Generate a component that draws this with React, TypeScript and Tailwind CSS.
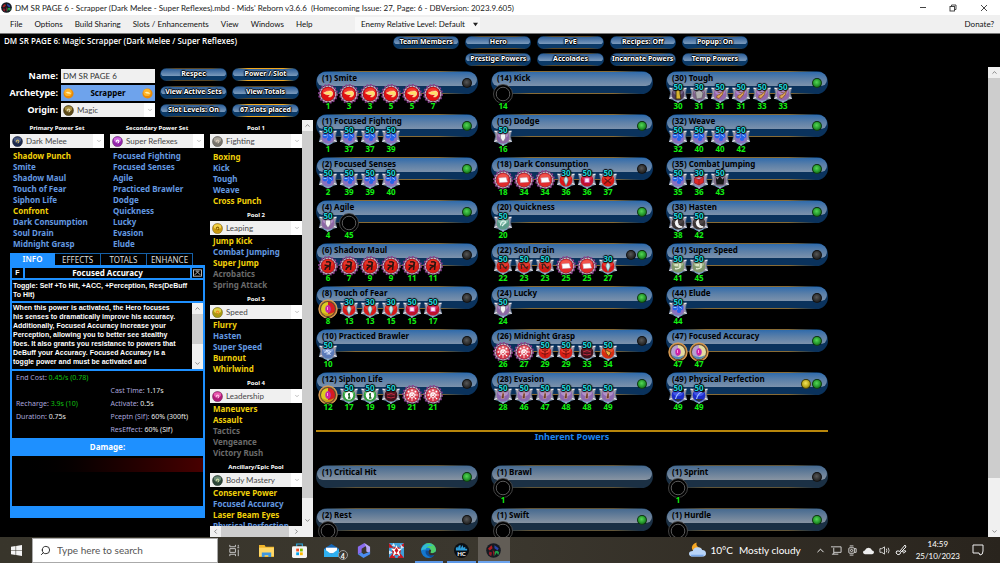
import type { ReactNode } from 'react'
import { ChevronDown, ChevronLeft, ChevronRight, ChevronUp, Search } from 'lucide-react'

type Slot = [icon: string, level: number, boost?: number]
type Power = { level: number; name: string; slots?: Slot[]; leds?: string[] }

const repeat = (icon: string, levels: number[], boost?: number): Slot[] => levels.map((l) => [icon, l, boost])

const POWERS: Power[] = [
    { level: 1, name: 'Smite', leds: ['off'], slots: repeat('fist', [1, 3, 3, 5, 5, 7]) },
    { level: 1, name: 'Focused Fighting', leds: ['on'], slots: repeat('dodge', [1, 37, 37, 39], 50) },
    { level: 2, name: 'Focused Senses', leds: ['on'], slots: repeat('dodge', [2, 39, 39, 40], 50) },
    { level: 4, name: 'Agile', leds: ['on'], slots: [['shield', 4, 50], ['empty', 45]] },
    { level: 6, name: 'Shadow Maul', leds: ['off'], slots: repeat('claw', [6, 7, 9, 9, 11, 11]) },
    {
        level: 8,
        name: 'Touch of Fear',
        leds: ['off'],
        slots: [['hero', 8], ...repeat('drop', [13, 13, 15], 30), ...repeat('gem', [15, 17], 50)],
    },
    { level: 10, name: 'Practiced Brawler', leds: ['off'], slots: [['swirl', 10, 50]] },
    {
        level: 12,
        name: 'Siphon Life',
        leds: ['off'],
        slots: [['hero', 12], ...repeat('heal', [17, 19], 50), ['dark', 19, 50], ...repeat('flake', [21, 21])],
    },
    { level: 14, name: 'Kick', slots: [['empty', 14]] },
    { level: 16, name: 'Dodge', leds: ['on'], slots: [['shield', 16, 50]] },
    {
        level: 18,
        name: 'Dark Consumption',
        leds: ['off'],
        slots: [...repeat('card', [18, 34, 34]), ['drop', 36, 30], ['gem', 36, 50], ['cross', 37, 50]],
    },
    { level: 20, name: 'Quickness', leds: ['on'], slots: [['teal', 20, 50]] },
    {
        level: 22,
        name: 'Soul Drain',
        leds: ['off', 'on'],
        slots: [...repeat('maul', [22, 23, 23], 50), ...repeat('card', [25, 25]), ['drop', 27, 30]],
    },
    { level: 24, name: 'Lucky', leds: ['on'], slots: [['shield', 24, 50]] },
    {
        level: 26,
        name: 'Midnight Grasp',
        leds: ['off'],
        slots: [...repeat('flake', [26, 27]), ...repeat('web', [29, 29], 50), ['dark', 33, 50], ['blade', 34, 50]],
    },
    { level: 28, name: 'Evasion', leds: ['on'], slots: repeat('boot', [28, 46, 47, 48, 48, 49], 50) },
    {
        level: 30,
        name: 'Tough',
        leds: ['on'],
        slots: [['idol', 30, 50], ['cube', 31, 30], ...repeat('bolt', [31, 31, 33, 33], 50)],
    },
    { level: 32, name: 'Weave', leds: ['on'], slots: repeat('dodge', [32, 40, 40, 42], 50) },
    {
        level: 35,
        name: 'Combat Jumping',
        leds: ['on'],
        slots: [['dodge', 35, 50], ['dice', 36, 30], ['crown', 43, 50]],
    },
    { level: 38, name: 'Hasten', leds: ['on'], slots: repeat('moon', [38, 42], 50) },
    { level: 41, name: 'Super Speed', leds: ['off'], slots: repeat('run', [41, 45], 50) },
    { level: 44, name: 'Elude', leds: ['off'], slots: [['dodge', 44, 50]] },
    { level: 47, name: 'Focused Accuracy', leds: ['on'], slots: repeat('focus', [47, 47]) },
    { level: 49, name: 'Physical Perfection', leds: ['mid', 'on'], slots: repeat('orbit', [49, 49], 50) },
]

// slot level 0 = inherent slot without a label
const INHERENT: Power[] = [
    { level: 1, name: 'Critical Hit', leds: ['on'] },
    { level: 1, name: 'Brawl', slots: [['empty', 1]] },
    { level: 1, name: 'Sprint', leds: ['off'], slots: [['empty', 1]] },
    { level: 2, name: 'Rest', leds: ['off'], slots: [['empty', 0]] },
    { level: 1, name: 'Swift', leds: ['on'], slots: [['empty', 0]] },
    { level: 1, name: 'Hurdle', leds: ['on'], slots: [['empty', 0]] },
]

// y = available, b = taken, g = locked
const COLORS: Record<string, string> = { y: 'text-[#f0d00a]', b: 'text-[#6399e0]', g: 'text-[#6b6b6b]' }

type SetData = { label: string; value: string; orb: [string, string, string]; powers: [string, string][] }

const PRIMARY: SetData = {
    label: 'Primary Power Set',
    value: 'Dark Melee',
    orb: ['#1d2a4e', '#4a5c86', '#c9b46a'],
    powers: [
        ['y', 'Shadow Punch'],
        ['b', 'Smite'],
        ['b', 'Shadow Maul'],
        ['b', 'Touch of Fear'],
        ['b', 'Siphon Life'],
        ['y', 'Confront'],
        ['b', 'Dark Consumption'],
        ['b', 'Soul Drain'],
        ['b', 'Midnight Grasp'],
    ],
}
const SECONDARY: SetData = {
    label: 'Secondary Power Set',
    value: 'Super Reflexes',
    orb: ['#9526ad', '#cf6be0', '#ffffff'],
    powers: [
        ['b', 'Focused Fighting'],
        ['b', 'Focused Senses'],
        ['b', 'Agile'],
        ['b', 'Practiced Brawler'],
        ['b', 'Dodge'],
        ['b', 'Quickness'],
        ['b', 'Lucky'],
        ['b', 'Evasion'],
        ['b', 'Elude'],
    ],
}
const POOLS: SetData[] = [
    {
        label: 'Pool 1',
        value: 'Fighting',
        orb: ['#77736c', '#aaa69c', '#d8c9b8'],
        powers: [['y', 'Boxing'], ['b', 'Kick'], ['b', 'Tough'], ['b', 'Weave'], ['y', 'Cross Punch']],
    },
    {
        label: 'Pool 2',
        value: 'Leaping',
        orb: ['#c99a10', '#f2d24a', '#8c6200'],
        powers: [['y', 'Jump Kick'], ['b', 'Combat Jumping'], ['y', 'Super Jump'], ['g', 'Acrobatics'], ['g', 'Spring Attack']],
    },
    {
        label: 'Pool 3',
        value: 'Speed',
        orb: ['#a89a10', '#e0d24a', '#f08c20'],
        powers: [['y', 'Flurry'], ['b', 'Hasten'], ['b', 'Super Speed'], ['y', 'Burnout'], ['y', 'Whirlwind']],
    },
    {
        label: 'Pool 4',
        value: 'Leadership',
        orb: ['#b01a78', '#e85ab0', '#ffc0e4'],
        powers: [['y', 'Maneuvers'], ['y', 'Assault'], ['g', 'Tactics'], ['g', 'Vengeance'], ['g', 'Victory Rush']],
    },
    {
        label: 'Ancillary/Epic Pool',
        value: 'Body Mastery',
        orb: ['#2c4638', '#6c8c78', '#c8d8a0'],
        powers: [['y', 'Conserve Power'], ['b', 'Focused Accuracy'], ['y', 'Laser Beam Eyes'], ['b', 'Physical Perfection']],
    },
]

const OUTLINE = '[text-shadow:1px_0_1px_#000,-1px_0_1px_#000,0_1px_1px_#000,0_-1px_1px_#000]'

/* frame kind, core colour, highlight colour, glyph */
const GLYPHS: Record<string, [string, string, string, ReactNode]> = {
    fist: ['spike', '#e01010', '#ff5a48', <path d="M5.500 9q4-2.500 7.500-2 2.500 1 1.500 4-1 2.500-4 2 2-2 1-2.500-3 1-6-1.500z" fill="#ffdf6a" stroke="#fff4d0" strokeWidth=".5" />],
    dodge: ['hex', '#8a70c0', '#c4b0f0', <g fill="#2463e8"><circle cx="7" cy="9" r="2.400" /><circle cx="12.300" cy="8.500" r="2.900" /><circle cx="11" cy="12" r="2.100" /><path d="M5.500 8.500h3M11 7.500l3 2" stroke="#9fd0ff" strokeWidth=".9" /></g>],
    shield: ['hex', '#8d68a6', '#c9a8dc', <path d="M7.500 7h5v4q-1 2.500-2.500 3.500-1.500-1-2.500-3.500z" fill="#f4f4f4" stroke="#7a6a84" strokeWidth=".6" />],
    claw: ['spike', '#d81c14', '#f05040', <path d="M8 6q5-1 4 2 0 2-3 3-2 1-2 3M6.500 9l4 1M12.500 6l-1 8" fill="none" stroke="#2c1410" strokeWidth="1.500" />],
    drop: ['hex', '#d81818', '#ff5040', <path d="M10 6q-2.500 2.500-2 5l2 4.500 2-4.500q.5-2.500-2-5z" fill="#c4ecf0" stroke="#47808a" strokeWidth=".6" />],
    gem: ['hex', '#c0102c', '#f04058', <rect x="7.800" y="8" width="4.400" height="4.400" fill="#ffe4f8" stroke="#d050b0" strokeWidth=".8" />],
    cross: ['hex', '#d81814', '#ff4a38', <path d="M6 14l8-6.500M6.500 8.500l6.500 5" stroke="#6c1410" strokeWidth="1.100" />],
    swirl: ['hex', '#5a7ab8', '#a8c0ec', <path d="M6.500 11q2.500-4 6-1.500-1 3.500-4 2.500M8 8l4.500 5" fill="none" stroke="#dce8ff" strokeWidth="1" />],
    heal: ['hex', '#2ea03c', '#8ce08c', <g><circle cx="10" cy="10.500" r="4.200" fill="#fff" /><path d="M10.200 8v5M9 9.500h1M9 13h2.500" stroke="#1c6a24" strokeWidth="1.400" /></g>],
    dark: ['hex', '#401018', '#70242e', <path d="M6 10q4-3 8 0M6 12q4 2 8 0" fill="none" stroke="#c02840" strokeWidth="1" />],
    flake: ['spike', '#d83848', '#f08890', <path d="M10 4.500v11M4.500 10h11M6 6l8 8M14 6l-8 8" stroke="#fff" strokeWidth="1.500" strokeDasharray="1.800 .7" />],
    card: ['spike', '#e02c2c', '#ff7a6a', <path d="M6 8l7-.5 1.500 4.500-8 .5z" fill="#fff" stroke="#c8c0d8" strokeWidth=".5" />],
    teal: ['hex', '#5a9c8a', '#a8dccc', <path d="M7.500 12.500q0-4.500 3.500-4.500 2 0 1.500 2M9 13l3.500-3.500" fill="none" stroke="#e0f4ec" strokeWidth="1.200" />],
    maul: ['hex', '#d01c14', '#f05040', <path d="M6.500 9q3-2 4 1t3.500.5M7.500 9v4M11 11l2.500 2" fill="none" stroke="#40201c" strokeWidth="1.300" />],
    web: ['hex', '#d81c14', '#ff5844', <path d="M10 6v9M7 8q3 3 6 0M6.500 11q3.500 3 7 0" fill="none" stroke="#7c1410" strokeWidth="1" />],
    blade: ['hex', '#d82c10', '#ff6a3c', <path d="M7 7.500l6 3-2 4-2.500-3z" fill="#f0b040" stroke="#4a2410" strokeWidth=".7" />],
    boot: ['hex', '#8c68b0', '#c8acd8', <path d="M10 6q1.800 3 1 7.500H8.300Q9 9 10 6z" fill="#6c3824" stroke="#e0b0a0" strokeWidth=".5" />],
    idol: ['hex', '#4c3a5c', '#8c78a0', <path d="M8 6h4v3.500l1 5.500H8z" fill="#d8b430" stroke="#342808" strokeWidth=".9" />],
    cube: ['hex', '#7c6088', '#a890b4', <path d="M6.500 8l4.500-2 3 3-1 5-5.500 1z" fill="#b0b0b0" stroke="#606060" strokeWidth=".7" />],
    bolt: ['hex', '#9064ac', '#c49cd8', <path d="M6.500 13.500q0-3 3.500-3l3.500-4-1 4-3.500 4zM7.500 8l3.500 1" fill="#e0a858" stroke="#7c4c18" strokeWidth=".7" />],
    dice: ['hex', '#9c80b0', '#c8b8d8', <path d="M5.500 8l4.500-3 4.500 2v5.500L10 15l-4.500-2zM10 9.500V15M5.500 8l4.500 1.700L14.500 7" fill="#e02828" stroke="#8c1010" strokeWidth=".6" />],
    crown: ['hex', '#7c6c88', '#a89cb0', <path d="M5.500 7l2 2.500L10 6l2.500 3.500 2-2.500-1 7.500h-7z" fill="#161616" />],
    moon: ['hex', '#3a3434', '#5c5454', <path d="M9.300 6q-3.500 3.500-1 7 2.500 2.500 6 1-5.500-1-5-8z" fill="#f4f4f4" stroke="#fff" strokeWidth=".9" />],
    run: ['hex', '#80986c', '#c4d4a8', <path d="M12 7v4.500q-2.500 2-5 1M6.500 9H10" fill="none" stroke="#e8f0d8" strokeWidth="1.400" />],
    orbit: ['hex', '#1c2cc8', '#5c70ff', <g><path d="M7.500 14q1-5 5.500-7" stroke="#a0c0ff" strokeWidth="1.200" fill="none" /><circle cx="14" cy="5.500" r="2" fill="#101014" /><path d="M6 14h8l-4 3z" fill="#303440" /></g>],
}

function SlotIcon({ icon }: { icon: string }) {
    if (icon === 'empty') {
        return (
            <svg viewBox="0 0 20 20" className="size-5 overflow-visible" aria-hidden="true">
                <circle cx="10" cy="10" r="9.500" fill="#000" stroke="#4c4c4c" strokeWidth=".9" />
                <circle cx="10" cy="10" r="6.800" fill="#000" stroke="#5c5c5c" strokeWidth="1" />
            </svg>
        )
    }
    if (icon === 'hero' || icon === 'focus') {
        const hero = icon === 'hero'
        return (
            <svg viewBox="0 0 20 20" className="size-5 overflow-visible" aria-hidden="true">
                <circle cx="10" cy="10" r="8.800" fill="#5a4a30" stroke="#c88438" strokeWidth="1.600" />
                <circle cx="10" cy="10" r="9.200" fill="none" stroke="#f4cc90" strokeWidth=".4" />
                <path d="M10 3a7 7 0 0 0 0 14z" fill={hero ? '#dccc20' : '#b8a0d0'} />
                <path d="M10 3a7 7 0 0 1 0 14z" fill={hero ? '#d81c20' : '#e4dca0'} />
                <path d="M4 13q6 4 12 0-2 4-6 4t-6-4z" fill={hero ? '#c89c18' : '#4c88b8'} />
                <ellipse cx="10" cy="10" rx="2.400" ry="3.600" fill="#d81ca0" stroke="#a83cc0" strokeWidth=".7" />
                <path d="M9.500 8v3" stroke="#ff9ce0" />
            </svg>
        )
    }
    const [frame, core, light, glyph] = GLYPHS[icon]
    return (
        <svg viewBox="0 0 20 20" className="size-5 overflow-visible" aria-hidden="true">
            {frame === 'hex' ? (
                <>
                    <path
                        d="M10 2l2.500 1.500L18.500 4 17.500 9.500l1.200 5-4.500 1.500L10 19l-4.200-3-4.500-1.500 1.200-5L1.500 4l6-.5z"
                        fill="#9a96a4"
                        stroke="#4c6a90"
                        strokeWidth=".6"
                    />
                    <path d="M1.500 4l2.500 1M18.500 4L16 5M1.300 14.500l2.500-1M18.700 14.500l-2.500-1M10 19v-2" stroke="#f0f0f2" strokeWidth="1.300" />
                    <path d="M5.500 16q4.500 3 9 0" stroke="#6fb4dc" strokeWidth=".8" fill="none" />
                    <circle cx="10" cy="10.300" r="6.300" fill={core} />
                    <ellipse cx="10" cy="8" rx="5" ry="3.300" fill={light} opacity=".6" />
                </>
            ) : (
                <>
                    <circle cx="10" cy="10" r="9.200" fill="#4c2450" stroke="#8c3c94" strokeWidth="1.400" strokeDasharray="1.800 1.800" />
                    <circle cx="10" cy="10" r="7.800" fill="none" stroke="#c4b0bc" strokeWidth="1.300" strokeDasharray="2.600 .5" />
                    <circle cx="10" cy="10" r="6.900" fill={core} />
                    <ellipse cx="10" cy="7.500" rx="5.300" ry="3.600" fill={light} opacity=".5" />
                </>
            )}
            {glyph}
        </svg>
    )
}

const LEDS: Record<string, string> = {
    on: 'bg-[radial-gradient(circle_at_45%_40%,#55d855,#23962a_55%,#0a3a10)]',
    off: 'bg-[radial-gradient(circle_at_45%_40%,#585858,#2e2e2e_55%,#101010)]',
    mid: 'bg-[radial-gradient(circle_at_45%_40%,#f4e45c,#b8a818_55%,#4a4208)]',
}

function PowerBar({ power, dim }: { power: Power; dim?: boolean }) {
    const { level, name, slots = [], leds = [] } = power
    return (
        <div className="h-[43px]">
            <button
                type="button"
                className={`relative flex h-[23px] w-full items-center justify-end overflow-hidden rounded-full pr-[6px] ${dim ? 'bg-[#1b3044]' : 'bg-[#0a325c]'}`}
            >
                <span
                    className={`absolute inset-x-px top-px h-[14px] rounded-t-[10px] rounded-b-[8px] ${dim ? 'bg-linear-to-b from-[#466a90] to-[#8894a2]' : 'bg-linear-to-b from-[#2f6bab] via-[#5c80a8] to-[#7c92ac]'}`}
                />
                <span
                    className={`absolute inset-x-3 inset-y-0 border-y border-[#a87a2c] mask-x-from-80% ${dim ? 'opacity-50' : 'opacity-80'}`}
                />
                <span className="absolute top-px left-[6px] text-[8px] leading-[11px] font-bold whitespace-nowrap text-black">
                    ({level}) {name}
                </span>
                <span className="relative flex gap-px">
                    {leds.map((led) => (
                        <span key={led} className={`size-[10px] rounded-full border border-black/60 ${LEDS[led]}`} />
                    ))}
                </span>
            </button>
            <div className="relative -mt-[10px] flex gap-px pl-[2px]">
                {slots.map(([icon, slotLevel, boost], i) => (
                    <div key={i} className="relative w-5 text-center text-[8px] leading-[8px] font-bold">
                        <SlotIcon icon={icon} />
                        {boost && (
                            <span className={`absolute inset-x-0 -top-px text-[#1fd0d8] ${OUTLINE}`}>{boost}</span>
                        )}
                        {slotLevel > 0 && (
                            <span className={`relative -mt-[2px] block text-[#12f012] ${OUTLINE}`}>{slotLevel}</span>
                        )}
                    </div>
                ))}
            </div>
        </div>
    )
}

function Pill({ children, gold }: { children: ReactNode; gold?: boolean }) {
    return (
        <button
            type="button"
            className={`relative flex h-[13px] items-center justify-center overflow-hidden rounded-full bg-[#0b3a68]`}
        >
            <span className="absolute inset-x-px top-px h-[7px] rounded-t-[6px] rounded-b-[4px] bg-linear-to-b from-[#2f6099] to-[#7c9bbc]" />
            <span
                className={`absolute inset-x-1 inset-y-0 border-y mask-x-from-80% ${gold ? 'border-[#f0a820]' : 'border-[#5c4824]'}`}
            />
            <span className={`relative text-[7px] font-bold whitespace-nowrap text-white ${OUTLINE}`}>{children}</span>
        </button>
    )
}

function Orb({ orb }: { orb: [string, string, string] }) {
    return (
        <svg viewBox="0 0 12 12" className="ml-[2px] size-[11px] shrink-0" aria-hidden="true">
            <circle cx="6" cy="6" r="5.600" fill={orb[0]} stroke="#3338" strokeWidth=".6" />
            <ellipse cx="6" cy="4" rx="4" ry="2.600" fill={orb[1]} />
            <path d="M4.500 7q0-2.500 1.500-2.500T7.500 6 6 7.500" fill="none" stroke={orb[2]} strokeWidth="1.100" />
        </svg>
    )
}

function PowerSet({ set, listGap }: { set: SetData; listGap?: string }) {
    const id = set.label.toLowerCase().replace(/\W+/g, '-')
    return (
        <div className="flex flex-col">
            <label htmlFor={id} className="block text-center text-[6px] leading-[11px] font-bold text-white">
                {set.label}
            </label>
            <SelectBox id={id} value={set.value} orb={set.orb} />
            <ul className={`pl-[3px] ${listGap ?? ''}`}>
                {set.powers.map(([state, name]) => (
                    <li key={name} className="h-[11px]">
                        <button
                            type="button"
                            className={`block text-[8px] leading-[11px] font-bold whitespace-nowrap ${COLORS[state]}`}
                        >
                            {name}
                        </button>
                    </li>
                ))}
            </ul>
        </div>
    )
}

function SelectBox({ id, value, orb }: { id: string; value: string; orb: [string, string, string] }) {
    return (
        <div className="flex h-[14px] items-center bg-[#f0f0f0]">
            <Orb orb={orb} />
            <select
                id={id}
                className="h-full min-w-0 flex-1 appearance-none pl-[3px] font-['Lato'] text-[8px] text-[#484848]"
            >
                <option>{value}</option>
            </select>
            <span className="flex h-full w-[11px] items-center justify-center bg-white">
                <ChevronDown className="size-[6px] text-[#808080]" />
            </span>
        </div>
    )
}

function TitleBar() {
    return (
        <header className="flex h-[15px] shrink-0 items-center bg-white font-['Lato'] text-[8px] text-[#222]">
            <MidsLogo className="mr-[3px] ml-px size-[11px]" />
            <h1 className="flex-1 whitespace-pre">
                {"DM SR PAGE 6 - Scrapper (Dark Melee - Super Reflexes).mbd - Mids' Reborn v3.6.6  (Homecoming Issue: 27, Page: 6 - DBVersion: 2023.9.605)"}
            </h1>
            <button type="button" aria-label="Minimise" className="grid h-full w-[30px] place-items-center">
                <span className="h-px w-[6px] bg-[#444]" />
            </button>
            <button type="button" aria-label="Restore" className="grid h-full w-[30px] place-items-center">
                <svg viewBox="0 0 8 8" className="size-2" fill="none" stroke="#333" strokeWidth=".9">
                    <rect x="1" y="2.500" width="4.500" height="4.500" />
                    <path d="M2.500 2.500V1H7v4.500H5.500" />
                </svg>
            </button>
            <button type="button" aria-label="Close" className="grid h-full w-[32px] place-items-center">
                <svg viewBox="0 0 8 8" className="size-2" stroke="#333" strokeWidth=".9">
                    <path d="M1 1l6 6M7 1L1 7" />
                </svg>
            </button>
        </header>
    )
}

function MenuBar() {
    return (
        <nav className="flex h-[18px] shrink-0 items-center bg-[#f0f0f0] font-['Lato'] text-[8px] text-[#111]">
            <div className="flex w-[355px] gap-[12px] pl-[10px] whitespace-nowrap">
                {['File', 'Options', 'Build Sharing', 'Slots / Enhancements', 'View', 'Windows', 'Help'].map((item) => (
                    <button key={item} type="button">
                        {item}
                    </button>
                ))}
            </div>
            <div className="flex h-[15px] items-center bg-[#f8f8f8] pl-[6px]">
                <select aria-label="Enemy Relative Level" className="w-[110px] appearance-none text-[8px]">
                    <option>Enemy Relative Level: Default</option>
                </select>
                <svg viewBox="0 0 6 6" className="mx-[2px] size-[5px]">
                    <path d="M0 1h6L3 5z" fill="#222" />
                </svg>
            </div>
            <a href="#donate" className="mr-[6px] ml-auto">
                Donate?
            </a>
        </nav>
    )
}

function MidsLogo({ className }: { className: string }) {
    return (
        <svg viewBox="0 0 16 16" className={className} aria-hidden="true">
            <circle cx="8" cy="8" r="7.800" fill="#161a22" />
            <path d="M2 6l4-3.500 1 3L4 8z" fill="#b01c20" />
            <path d="M9 2.500l4.500 3L12.500 8 9 5.500z" fill="#2846a8" />
            <path d="M3.500 9l3 1-1 4-2.500-2zM7 7l2.500 3L8 14z" fill="#901828" />
            <path d="M9.500 9q3-2 4.500 1l-1 3-1.500-2.500L9 14z" fill="#20a048" />
        </svg>
    )
}

function Coin() {
    return (
        <svg viewBox="0 0 12 12" className="size-[11px]" aria-hidden="true">
            <circle cx="6" cy="6" r="5.500" fill="#e88a08" />
            <circle cx="5.500" cy="4.800" r="4" fill="#ffb428" />
            <path d="M3 5q3-2 6 1-3 1-6-1z" fill="#fff0b0" />
        </svg>
    )
}

function BuildForm() {
    return (
        <div className="flex gap-[5px] pt-[2px] pr-[14px]">
            <div className="grid w-[155px] grid-cols-[58px_1fr] items-center gap-x-[3px] gap-y-[2px] text-[9px] leading-[14px] font-bold text-white">
                <label htmlFor="name" className="text-right">
                    Name:
                </label>
                <input
                    id="name"
                    defaultValue="DM SR PAGE 6"
                    className="h-[14px] min-w-0 bg-[#f0f0f0] pl-[2px] font-['Lato'] text-[8px] font-normal text-[#333]"
                />
                <label htmlFor="archetype" className="text-right">
                    Archetype:
                </label>
                <div className="flex h-[16px] items-center justify-between bg-[#6ea3ec] px-[2px]">
                    <Coin />
                    <select
                        id="archetype"
                        className="h-full min-w-0 flex-1 appearance-none text-center text-[8px] font-bold text-black [text-align-last:center]"
                    >
                        <option>Scrapper</option>
                    </select>
                    <Coin />
                </div>
                <label htmlFor="origin" className="text-right">
                    Origin:
                </label>
                <div className="font-normal">
                    <SelectBox id="origin" value="Magic" orb={['#5c4a18', '#a89040', '#e8dcb0']} />
                </div>
            </div>
            <div className="-mt-px grid flex-1 grid-cols-2 content-between gap-x-[5px]">
                <Pill>Respec</Pill>
                <Pill gold>Power / Slot</Pill>
                <Pill>View Active Sets</Pill>
                <Pill>View Totals</Pill>
                <Pill>Slot Levels: On</Pill>
                <Pill gold>67 slots placed</Pill>
            </div>
        </div>
    )
}

function Stat({ label, value, green }: { label: string; value: string; green?: boolean }) {
    return (
        <p className="h-[13px] leading-[13px] whitespace-nowrap text-[#a9a6dc]">
            {label && `${label}: `}
            <span className={green ? 'text-[#10c010]' : 'text-[#e8e8e8]'}>{value}</span>
        </p>
    )
}

function InfoPanel() {
    return (
        <section className="mt-[4px] w-[195px]">
            <div role="tablist" className="flex h-[12px] pr-[12px] text-[8px] text-[#ddd]">
                {['INFO', 'EFFECTS', 'TOTALS', 'ENHANCE'].map((tab, i) => (
                    <button
                        key={tab}
                        type="button"
                        role="tab"
                        aria-selected={i === 0}
                        className={`flex-1 leading-[12px] ${i === 0 ? 'bg-[#1e90ff] font-semibold text-white' : 'border-t border-r border-[#1560a8]'}`}
                    >
                        {tab}
                    </button>
                ))}
            </div>
            <div className="flex flex-col gap-[2px] bg-[#1e90ff] px-[2px] pt-[3px] pb-[12px] font-['Liberation_Sans'] text-[8px] text-white">
                <div className="flex h-[10px] gap-[2px] text-[8px] leading-[10px] font-bold">
                    <button type="button" className="w-[11px] bg-black text-[7px]">
                        F
                    </button>
                    <h2 className="flex-1 bg-black text-center font-['Noto_Sans']">Focused Accuracy</h2>
                    <button type="button" aria-label="Dock" className="grid w-[11px] place-items-center bg-black">
                        <svg viewBox="0 0 10 8" className="h-[8px] w-[9px]" fill="none" stroke="#ddd" strokeWidth=".9">
                            <rect x=".5" y=".5" width="9" height="7" />
                            <path d="M2 6l3-3 3 3M3 2h4" />
                        </svg>
                    </button>
                </div>
                <p className="h-[21px] bg-black pt-px pl-px text-[7px] leading-[9px] font-bold">
                    Toggle: Self +To Hit, +ACC, +Perception, Res(DeBuff
                    <br />
                    To Hit)
                </p>
                <div className="flex h-[66px] overflow-hidden bg-black">
                    <p className="flex-1 pl-px text-[7px] leading-[9px] font-bold whitespace-pre">
                        {`When this power is activated, the Hero focuses
his senses to dramatically improve his accuracy.
Additionally, Focused Accuracy increase your
Perception, allowing you to better see stealthy
foes. It also grants you resistance to powers that
DeBuff your Accuracy. Focused Accuracy is a
toggle power and must be activated and`}
                    </p>
                    <div className="flex w-[11px] flex-col items-center bg-[#f0f0f0] text-[#444]">
                        <ChevronUp className="m-[2px] size-[7px]" />
                        <span className="h-[30px] w-full bg-[#cdcdcd]" />
                        <ChevronDown className="m-[2px] mt-auto size-[7px]" />
                    </div>
                </div>
                <div className="grid h-[67px] grid-cols-2 bg-black px-[4px] font-['Noto_Sans'] text-[7px]">
                    <div>
                        <Stat label="End Cost" value="0.45/s (0.78)" green />
                        <Stat label="" value="" />
                        <Stat label="Recharge" value="3.9s (10)" green />
                        <Stat label="Duration" value="0.75s" />
                    </div>
                    <div className="pt-[13px] pl-[3px]">
                        <Stat label="Cast Time" value="1.17s" />
                        <Stat label="Activate" value="0.5s" />
                        <Stat label="Pceptn (Slf)" value="60% (300ft)" />
                        <Stat label="ResEffect" value="60% (Slf)" />
                    </div>
                </div>
                <h3 className="h-[14px] text-center font-['Noto_Sans'] text-[8px] leading-[14px] font-bold">Damage:</h3>
                <div className="h-[50px] bg-black pt-[2px]">
                    <div className="h-[14px] bg-linear-to-r from-black to-[#480000]" />
                </div>
            </div>
        </section>
    )
}

function PoolColumn() {
    return (
        <div className="flex min-w-0 flex-1 bg-black">
            <div className="flex min-w-0 flex-1 flex-col">
                <div className="min-h-0 flex-1 space-y-[4px] overflow-hidden pt-[3px]">
                    {POOLS.map((pool, i) => (
                        <PowerSet key={pool.label} set={pool} listGap={i === 0 ? 'pt-[3px]' : ''} />
                    ))}
                </div>
                <div className="flex h-[11px] shrink-0 items-center bg-[#f0f0f0] text-[#444]">
                    <ChevronLeft className="mx-[2px] size-[7px]" />
                    <span className="mr-auto h-full w-[68px] bg-[#cdcdcd]" />
                    <ChevronRight className="mx-[2px] size-[7px]" />
                </div>
            </div>
            <div className="flex w-[11px] flex-col items-center bg-[#f0f0f0] text-[#444]">
                <ChevronUp className="my-[2px] size-[7px]" />
                <span className="h-[367px] w-full bg-[#cdcdcd]" />
                <ChevronDown className="mt-auto mb-[13px] size-[7px]" />
            </div>
        </div>
    )
}

function BuildView() {
    return (
        <main className="min-w-0 flex-1 overflow-hidden pt-[4px] pl-[3px]">
            <div className="max-w-[512px]">
                <div className="grid grid-flow-col grid-cols-3 grid-rows-8 gap-x-[13px]">
                    {POWERS.map((power) => (
                        <PowerBar key={power.name} power={power} />
                    ))}
                </div>
                <h2 className="mt-[15px] border-t-2 border-[#b8860b] text-center text-[9px] leading-[10px] font-bold text-[#1e86f0]">
                    Inherent Powers
                </h2>
                <div className="mt-[23px] grid grid-cols-3 gap-x-[13px]">
                    {INHERENT.map((power) => (
                        <PowerBar key={power.name} power={power} dim />
                    ))}
                </div>
            </div>
        </main>
    )
}

const APPS: { name: string; running?: boolean; icon: ReactNode }[] = [
    {
        name: 'Task View',
        icon: <path d="M3 2v2h6V2M3 14v-2h6v2M3 6h6v4H3zM12 2v2M12 7v7M11 5h2" fill="none" stroke="#ccc" strokeWidth="1" />,
    },
    {
        name: 'File Explorer',
        icon: (
            <g>
                <path d="M0 2h6l1 2h9v11H0z" fill="#f0b429" />
                <path d="M0 5h16v9H0z" fill="#ffd766" />
                <path d="M3 15v-5h10v5h-3v-2H6v2z" fill="#3f97e0" />
            </g>
        ),
    },
    {
        name: 'Store',
        icon: (
            <g>
                <path d="M5 4V1h6v3" fill="none" stroke="#2aa8e0" strokeWidth="1.200" />
                <rect y="3.500" width="16" height="12.500" rx="1.500" fill="#f4f4f4" />
                <path d="M4.500 6h3v3h-3z" fill="#f04e23" />
                <path d="M8.500 6h3v3h-3z" fill="#7fba00" />
                <path d="M4.500 10h3v3h-3z" fill="#00a4ef" />
                <path d="M8.500 10h3v3h-3z" fill="#ffb900" />
            </g>
        ),
    },
    {
        name: 'Mail',
        icon: (
            <g>
                <path d="M0 6l8-5 8 5v9H0z" fill="#1466b8" />
                <path d="M2 5h12v6H2z" fill="#fff" />
                <path d="M0 6l8 6 8-6v9H0z" fill="#2fb0f0" />
            </g>
        ),
    },
    {
        name: 'Microsoft 365',
        icon: (
            <g>
                <path d="M9 0L2 4v8l4-2V6l5-3z" fill="#8a6cf0" />
                <path d="M9 0l6 4v7l-4-2V5z" fill="#b8a8f8" />
                <path d="M2 12l6 4 7-4V9l-7 3-2-2z" fill="#4a8cf0" />
            </g>
        ),
    },
    {
        name: 'City of Heroes',
        icon: (
            <g>
                <path d="M0 0h16v16H0z" fill="#3f9fd8" />
                <path d="M0 0l5 5H0zM16 0l-5 4h5zM0 16l4-5 3 5zM16 16l-4-5-3 5z" fill="#c81820" />
                <path d="M5 0l2 4-4-1zM12 1l1 5 3-1zM0 8l4 2-4 2z" fill="#d8e8f8" />
                <circle cx="8" cy="8.500" r="4.600" fill="#d02028" />
                <path d="M8 2l1.500 4H14l-3.500 3 1.500 5-4-3-4 3 1.500-5L2 6h4.500z" fill="#fff" />
                <path d="M8 5l2 3-2 3-2-3z" fill="#c81820" />
            </g>
        ),
    },
    {
        name: 'Edge',
        running: true,
        icon: (
            <g>
                <circle cx="8" cy="8" r="8" fill="#1478d0" />
                <path d="M1 6q2-6 8-6 6 1 7 7 0 4-4 4-3 0-2-2 1-4-3-4-4 0-6 1z" fill="#4fd06c" />
                <path d="M0 8q1-6 7-7 4 0 6 2-7-1-8 4-3 0-5 1z" fill="#30b8d8" />
                <path d="M5 8q-1 5 5 7 3 0 4-2-6 1-6-5z" fill="#0c4c98" />
                <path d="M9 7q3 0 1 3 2 2 6-1 0 3-2 4-6 1-6-4z" fill="#34312a" />
            </g>
        ),
    },
    {
        name: 'HC',
        running: true,
        icon: (
            <g>
                <circle cx="8" cy="8" r="8" fill="#0a0e14" />
                <path d="M2 8V5l2-1v2l1-3 2-1v4l2-4 1 3 2-1v2h2v2z" fill="#2c9cd8" />
                <text x="8" y="13.500" fontSize="6.500" fontWeight="700" textAnchor="middle" fill="#fff">
                    HC
                </text>
            </g>
        ),
    },
]

function Taskbar() {
    return (
        <footer className="flex h-[26px] shrink-0 items-stretch bg-linear-to-r from-[#38352b] via-[#3b372e] to-[#29241d] font-['Lato'] text-white">
            <button type="button" aria-label="Start" className="grid w-8 place-items-center">
                <svg viewBox="0 0 12 12" className="size-[11px]" fill="#f4f4f4">
                    <path d="M0 2l5-.8v4.500H0zM5.600 1L12 0v5.700H5.600zM0 6.300h5v4.500L0 10zM5.600 6.300H12V12l-6.400-1z" />
                </svg>
            </button>
            <label className="mt-px flex w-[186px] items-center gap-[6px] border border-[#aaa] bg-white pl-[7px] text-[#555]">
                <Search className="size-[11px] -scale-x-100 text-[#222]" strokeWidth={2} />
                <input
                    aria-label="Search"
                    placeholder="Type here to search"
                    className="w-[140px] text-[10px] placeholder:text-[#555]"
                />
            </label>
            <div className="flex w-[292px]">
                {APPS.map(({ name, running, icon }) => (
                    <button
                        key={name}
                        type="button"
                        aria-label={name}
                        className="relative grid flex-1 place-items-center"
                    >
                        <svg viewBox="0 0 16 16" className="size-[15px]">
                            {icon}
                        </svg>
                        {name === 'Mail' && (
                            <span className="absolute right-0 bottom-[3px] grid size-[10px] place-items-center rounded-full border border-[#999] bg-[#3c3a34] text-[7px] font-bold">
                                4
                            </span>
                        )}
                        {running && <span className="absolute inset-x-[2px] bottom-0 h-[2px] bg-[#5c98e8]" />}
                    </button>
                ))}
                <button type="button" aria-label="Mids' Reborn" className="relative grid flex-1 place-items-center bg-[#625d56]">
                    <MidsLogo className="size-[15px]" />
                    <span className="absolute inset-x-0 bottom-0 h-[2px] bg-[#6ca4ee]" />
                </button>
            </div>
            <div className="ml-auto flex items-center text-[10px] whitespace-nowrap">
                <svg viewBox="0 0 18 16" className="mr-[5px] h-4 w-[17px]">
                    <path d="M8 0q-1 5 5 6-1 4-6 4-4-1-4-5 1-4 5-5z" fill="#f5a623" />
                    <path d="M4 15q-4 0-4-3t4-3q1-4 5-4 4 0 5 3 4 0 4 4 0 3-4 3z" fill="#b8d4f8" />
                    <path d="M2 13h14q-1 2-3 2H4q-2 0-2-2z" fill="#7aa8e8" />
                </svg>
                <span className="mr-[6px]">10°C</span>
                <span className="mr-[14px]">Mostly cloudy</span>
                <div className="mr-[9px] flex items-center gap-[5px]">
                    <ChevronUp className="size-[11px]" />
                    <svg viewBox="0 0 12 12" className="size-[11px]" fill="none" stroke="#eee" strokeWidth=".9">
                        <path d="M3 2h8v6H3V3M3 8v2M1 10h7M0 2h3" />
                    </svg>
                    <svg viewBox="0 0 12 12" className="size-[11px]" fill="none" stroke="#eee" strokeWidth=".9">
                        <rect x="2" y="3" width="6" height="6" rx="1" />
                        <path d="M3 1h4M3 11h4M8 4h2v4H8" />
                        <circle cx="5" cy="6" r="1.200" />
                    </svg>
                    <svg viewBox="0 0 12 12" className="size-[11px]" fill="#eee">
                        <path d="M2 10q-2 0-2-2t2-2q1-3 4-3t4 3q2 0 2 2t-2 2z" />
                    </svg>
                    <svg viewBox="0 0 12 12" className="size-[11px]" fill="none" stroke="#eee" strokeWidth=".9">
                        <path d="M1 4h2l3-2v8L3 8H1zM8 4q1 2 0 4M10 3q2 3 0 6" />
                    </svg>
                    <svg viewBox="0 0 12 12" className="size-[12px]" fill="none" stroke="#eee" strokeWidth="1">
                        <path d="M1 9q0-3 3-2t1 3-4-1zM5 7l5-6 1 2-5 5M7 8q2-2 4-1-1 2-3 2" />
                    </svg>
                </div>
                <div className="mr-[12px] text-center text-[8px] leading-[12px]">
                    14:59
                    <br />
                    25/10/2023
                </div>
                <svg viewBox="0 0 12 12" className="mr-[16px] size-[12px]" fill="none" stroke="#eee" strokeWidth="1">
                    <path d="M7 9H1V1h10v6M8 11q3 0 3-4M7 9l1 2" />
                </svg>
            </div>
        </footer>
    )
}

export default function App() {
    return (
        <div className="flex h-screen flex-col overflow-hidden bg-black font-['Noto_Sans',sans-serif]">
            <TitleBar />
            <MenuBar />
            <div className="flex shrink-0 border-t border-[#777] pt-[2px] pb-px">
                <p className="w-[393px] shrink-0 pl-[4px] font-['Open_Sans'] text-[8px] leading-[9px] font-semibold text-white">
                    DM SR PAGE 6: Magic Scrapper (Dark Melee / Super Reflexes)
                </p>
                <div className="grid w-[355px] grid-cols-5 gap-x-[6px] gap-y-[4px]">
                    <Pill>Team Members</Pill>
                    <Pill>Hero</Pill>
                    <Pill>PvE</Pill>
                    <Pill>Recipes: Off</Pill>
                    <Pill>Popup: On</Pill>
                    <span />
                    <Pill>Prestige Powers</Pill>
                    <Pill>Accolades</Pill>
                    <Pill>Incarnate Powers</Pill>
                    <Pill>Temp Powers</Pill>
                </div>
            </div>
            <div className="flex min-h-0 flex-1">
                <aside className="flex w-[313px] shrink-0 flex-col gap-[3px]">
                    <BuildForm />
                    <div className="flex min-h-0 flex-1">
                        <div className="ml-[10px] flex w-[200px] flex-col pt-[3px]">
                            <div className="grid w-[194px] grid-cols-2 gap-x-[6px]">
                                <PowerSet set={PRIMARY} listGap="pt-[2px]" />
                                <PowerSet set={SECONDARY} listGap="pt-[2px]" />
                            </div>
                            <InfoPanel />
                        </div>
                        <PoolColumn />
                    </div>
                </aside>
                <BuildView />
                <div className="flex w-[12px] flex-col items-center bg-[#f0f0f0] text-[#444]">
                    <ChevronUp className="my-[2px] size-[7px]" />
                    <span className="h-[400px] w-full bg-[#cdcdcd]" />
                    <ChevronDown className="mt-auto mb-[2px] size-[7px]" />
                </div>
            </div>
            <Taskbar />
        </div>
    )
}
